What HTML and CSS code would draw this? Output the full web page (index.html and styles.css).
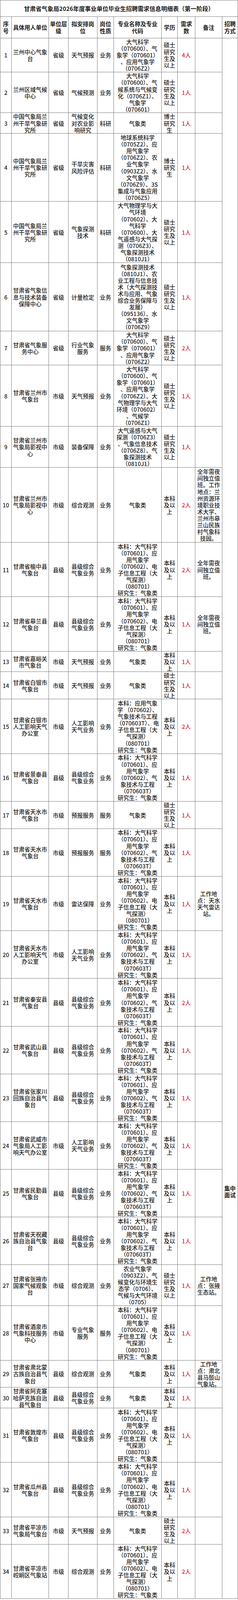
FILE: index.html
```html
<!DOCTYPE html>
<html lang="zh-CN">
<head>
<meta charset="utf-8">
<title>甘肃省气象局2026年度事业单位毕业生招聘需求信息明细表</title>
<link rel="stylesheet" href="styles.css">
</head>
<body>
<div class="sheet">
<div class="c title">甘肃省气象局2026年度事业单位毕业生招聘需求信息明细表（第一阶段）</div>
<div class="c hd">序<br>号</div><div class="c hd">具体用人单位</div><div class="c hd">单位层<br>级</div><div class="c hd">拟安排岗<br>位</div><div class="c hd">岗位<br>性质</div><div class="c hd">专业名称及专业<br>代码</div><div class="c hd">学历</div><div class="c hd">需求<br>数</div><div class="c hd">备注</div><div class="c hd">招聘<br>方式</div>
<div class="c method">集中<br>面试</div>

<div class="c">1</div><div class="c">兰州中心气象<br>台</div><div class="c">省级</div><div class="c">天气预报</div><div class="c">业务</div><div class="c">大气科学<br>（070600）、气<br>象学（070601）<br>、应用气象学<br>（0706Z2）</div><div class="c">硕士<br>研究<br>生及<br>以上</div><div class="c num">4人</div><div class="c"></div>
<div class="c">2</div><div class="c">兰州区域气候<br>中心</div><div class="c">省级</div><div class="c">气候预测</div><div class="c">业务</div><div class="c">大气科学<br>（070600）、气<br>候系统与气候变<br>化（0706Z1）、<br>气象学<br>（070601）</div><div class="c">硕士<br>研究<br>生及<br>以上</div><div class="c num">1人</div><div class="c"></div>
<div class="c">3</div><div class="c">中国气象局兰<br>州干旱气象研<br>究所</div><div class="c">省级</div><div class="c">气候变化<br>对农业影<br>响研究</div><div class="c">科研</div><div class="c">气象类</div><div class="c">博士<br>研究<br>生</div><div class="c num">1人</div><div class="c"></div>
<div class="c">4</div><div class="c">中国气象局兰<br>州干旱气象研<br>究所</div><div class="c">省级</div><div class="c">干旱灾害<br>风险评估</div><div class="c">科研</div><div class="c">地球系统科学<br>（0705Z2）、应<br>用气象学<br>（0706Z2）、农<br>业气象学<br>（0903Z2）、水<br>文气象学<br>（0706Z9）、3S<br>集成与气象应用<br>（0706Z5）</div><div class="c">博士<br>研究<br>生</div><div class="c num">1人</div><div class="c"></div>
<div class="c">5</div><div class="c">中国气象局兰<br>州干旱气象研<br>究所</div><div class="c">省级</div><div class="c">气象探测<br>技术</div><div class="c">科研</div><div class="c">大气物理学与大<br>气环境<br>（070602）、大<br>气科学<br>（070600）、大<br>气遥感与大气探<br>测（0706Z3）、<br>气象探测技术<br>（0810J1）</div><div class="c">硕士<br>研究<br>生及<br>以上</div><div class="c num">1人</div><div class="c"></div>
<div class="c">6</div><div class="c">甘肃省气象信<br>息与技术装备<br>保障中心</div><div class="c">省级</div><div class="c">计量检定</div><div class="c">业务</div><div class="c">气象探测技术<br>（0810J1）、农<br>业工程与信息技<br>术（大气探测技<br>术与应用、气象<br>综合业务保障与<br>发展）<br>（095136）、水<br>文气象学<br>（0706Z9）</div><div class="c">硕士<br>研究<br>生及<br>以上</div><div class="c num">1人</div><div class="c"></div>
<div class="c">7</div><div class="c">甘肃省气象服<br>务中心</div><div class="c">省级</div><div class="c">行业气象<br>服务</div><div class="c">服务</div><div class="c">大气科学<br>（070600）、气<br>象学（070601）<br>、应用气象学<br>（0706Z2）</div><div class="c">硕士<br>研究<br>生及<br>以上</div><div class="c num">2人</div><div class="c"></div>
<div class="c">8</div><div class="c">甘肃省兰州市<br>气象台</div><div class="c">市级</div><div class="c">天气预报</div><div class="c">业务</div><div class="c">大气科学<br>（070600）、气<br>象学（070601）<br>、应用气象学<br>（0706Z2）、大<br>气物理学与大气<br>环境（070602）<br>、气候学<br>（0706Z1）</div><div class="c">硕士<br>研究<br>生及<br>以上</div><div class="c num">1人</div><div class="c"></div>
<div class="c">9</div><div class="c">甘肃省兰州市<br>气象局影视中<br>心</div><div class="c">市级</div><div class="c">装备保障</div><div class="c">业务</div><div class="c">大气遥感与大气<br>探测（0706Z3）<br>、气象信息技术<br>（0706Z8）、气<br>象探测技术<br>（0810J1）</div><div class="c">硕士<br>研究<br>生及<br>以上</div><div class="c num">1人</div><div class="c"></div>
<div class="c">10</div><div class="c">甘肃省兰州市<br>气象局影视中<br>心</div><div class="c">市级</div><div class="c">综合观测</div><div class="c">业务</div><div class="c">气象类</div><div class="c">本科<br>及以<br>上</div><div class="c num">2人</div><div class="c">全年需夜<br>间独立值<br>班。工作<br>地点：兰<br>州资源环<br>境职业技<br>术大学、<br>兰州市皋<br>兰山民族<br>村气象科<br>技园。</div>
<div class="c">11</div><div class="c">甘肃省榆中县<br>气象台</div><div class="c">县级</div><div class="c">县级综合<br>气象业务</div><div class="c">业务</div><div class="c">本科：大气科学<br>（070601）、应<br>用气象学<br>（070602）、电<br>子信息工程（大<br>气探测）<br>（080701）<br>研究生：气象类</div><div class="c">本科<br>及以<br>上</div><div class="c num">2人</div><div class="c">全年需夜<br>间独立值<br>班。</div>
<div class="c">12</div><div class="c">甘肃省皋兰县<br>气象台</div><div class="c">县级</div><div class="c">县级综合<br>气象业务</div><div class="c">业务</div><div class="c">本科：大气科学<br>（070601）、应<br>用气象学<br>（070602）、电<br>子信息工程（大<br>气探测）<br>（080701）<br>研究生：气象类</div><div class="c">本科<br>及以<br>上</div><div class="c num">1人</div><div class="c">全年需夜<br>间独立值<br>班。</div>
<div class="c">13</div><div class="c">甘肃省嘉峪关<br>市气象台</div><div class="c">市级</div><div class="c">天气预报</div><div class="c">业务</div><div class="c">气象类</div><div class="c">本科<br>及以<br>上</div><div class="c num">1人</div><div class="c"></div>
<div class="c">14</div><div class="c">甘肃省白银市<br>气象台</div><div class="c">市级</div><div class="c">天气预报</div><div class="c">业务</div><div class="c">气象类</div><div class="c">硕士<br>研究<br>生及<br>以上</div><div class="c num">1人</div><div class="c"></div>
<div class="c">15</div><div class="c">甘肃省白银市<br>人工影响天气<br>办公室</div><div class="c">市级</div><div class="c">人工影响<br>天气业务</div><div class="c">业务</div><div class="c">本科：应用气象<br>学 （070602）、<br>气象技术与工程<br>（070603T）、电<br>子信息工程（大<br>气探测）<br>（080701）<br>研究生：气象类</div><div class="c">本科<br>及以<br>上</div><div class="c num">2人</div><div class="c"></div>
<div class="c">16</div><div class="c">甘肃省景泰县<br>气象台</div><div class="c">县级</div><div class="c">县级综合<br>气象业务</div><div class="c">业务</div><div class="c">本科：大气科学<br>（070601）、应<br>用气象学<br>（070602）、气<br>象技术与工程<br>（070603T）<br>研究生：气象类</div><div class="c">本科<br>及以<br>上</div><div class="c num">1人</div><div class="c"></div>
<div class="c">17</div><div class="c">甘肃省天水市<br>气象台</div><div class="c">市级</div><div class="c">预报服务</div><div class="c">服务</div><div class="c">气象类</div><div class="c">硕士<br>研究<br>生及<br>以上</div><div class="c num">1人</div><div class="c"></div>
<div class="c">18</div><div class="c">甘肃省天水市<br>气象台</div><div class="c">市级</div><div class="c">预报服务</div><div class="c">服务</div><div class="c">本科：大气科学<br>（070601）、应<br>用气象学<br>（070602）、气<br>象技术与工程<br>（070603T）<br>研究生：气象类</div><div class="c">本科<br>及以<br>上</div><div class="c num">1人</div><div class="c"></div>
<div class="c">19</div><div class="c">甘肃省天水市<br>气象台</div><div class="c">市级</div><div class="c">雷达保障</div><div class="c">业务</div><div class="c">本科：大气科学<br>（070601）、应<br>用气象学<br>（070602）、电<br>子信息工程（大<br>气探测）<br>（080701）<br>研究生：气象类</div><div class="c">本科<br>及以<br>上</div><div class="c num">1人</div><div class="c">工作地<br>点：天水<br>天气雷达<br>站。</div>
<div class="c">20</div><div class="c">甘肃省天水市<br>人工影响天气<br>办公室</div><div class="c">市级</div><div class="c">人工影响<br>天气业务</div><div class="c">业务</div><div class="c">本科：大气科学<br>（070601）、应<br>用气象学<br>（070602）、气<br>象技术与工程<br>（070603T）<br>研究生：气象类</div><div class="c">本科<br>及以<br>上</div><div class="c num">1人</div><div class="c"></div>
<div class="c">21</div><div class="c">甘肃省秦安县<br>气象台</div><div class="c">县级</div><div class="c">县级综合<br>气象业务</div><div class="c">业务</div><div class="c">本科：大气科学<br>（070601）、应<br>用气象学<br>（070602）、气<br>象技术与工程<br>（070603T）<br>研究生：气象类</div><div class="c">本科<br>及以<br>上</div><div class="c num">2人</div><div class="c"></div>
<div class="c">22</div><div class="c">甘肃省武山县<br>气象台</div><div class="c">县级</div><div class="c">县级综合<br>气象业务</div><div class="c">业务</div><div class="c">本科：大气科学<br>（070601）、应<br>用气象学<br>（070602）、气<br>象技术与工程<br>（070603T）<br>研究生：气象类</div><div class="c">本科<br>及以<br>上</div><div class="c num">1人</div><div class="c"></div>
<div class="c">23</div><div class="c">甘肃省张家川<br>回族自治县气<br>象台</div><div class="c">县级</div><div class="c">县级综合<br>气象业务</div><div class="c">业务</div><div class="c">本科：大气科学<br>（070601）、应<br>用气象学<br>（070602）、气<br>象技术与工程<br>（070603T）<br>研究生：气象类</div><div class="c">本科<br>及以<br>上</div><div class="c num">1人</div><div class="c"></div>
<div class="c">24</div><div class="c">甘肃省武威市<br>气象局人工影<br>响天气办公室</div><div class="c">市级</div><div class="c">人工影响<br>天气业务</div><div class="c">业务</div><div class="c">本科：大气科学<br>（070601）、应<br>用气象学<br>（070602）、气<br>象技术与工程<br>（070603T）<br>研究生：气象类</div><div class="c">本科<br>及以<br>上</div><div class="c num">1人</div><div class="c"></div>
<div class="c">25</div><div class="c">甘肃省民勤县<br>气象台</div><div class="c">县级</div><div class="c">县级综合<br>气象业务</div><div class="c">业务</div><div class="c">本科：大气科学<br>（070601）、应<br>用气象学<br>（070602）、气<br>象技术与工程<br>（070603T）<br>研究生：气象类</div><div class="c">本科<br>及以<br>上</div><div class="c num">1人</div><div class="c"></div>
<div class="c">26</div><div class="c">甘肃省天祝藏<br>族自治县气象<br>台</div><div class="c">县级</div><div class="c">县级综合<br>气象业务</div><div class="c">业务</div><div class="c">本科：大气科学<br>（070601）、应<br>用气象学<br>（070602）、气<br>象技术与工程<br>（070603T）<br>研究生：气象类</div><div class="c">本科<br>及以<br>上</div><div class="c num">1人</div><div class="c"></div>
<div class="c">27</div><div class="c">甘肃省张掖市<br>国家气候观象<br>台</div><div class="c">市级</div><div class="c">综合观测</div><div class="c">业务</div><div class="c">农业气象学<br>（0903Z2）、气<br>候变化与环境生<br>态学（0706）、<br>气候与大气环境<br>（0705）</div><div class="c">硕士<br>研究<br>生及<br>以上</div><div class="c num">1人</div><div class="c">工作地<br>点：张掖<br>生态站。</div>
<div class="c">28</div><div class="c">甘肃省酒泉市<br>气象科技服务<br>中心</div><div class="c">市级</div><div class="c">专业气象<br>服务</div><div class="c">服务</div><div class="c">本科：大气科学<br>（070601）、应<br>用气象学<br>（070602）、电<br>子信息工程（大<br>气探测）<br>（080701）<br>研究生：气象类</div><div class="c">本科<br>及以<br>上</div><div class="c num">1人</div><div class="c"></div>
<div class="c">29</div><div class="c">甘肃省肃北蒙<br>古族自治县气<br>象台</div><div class="c">县级</div><div class="c">综合观测</div><div class="c">业务</div><div class="c">气象类</div><div class="c">本科<br>及以<br>上</div><div class="c num">1人</div><div class="c">工作地<br>点：肃北<br>县马鬃山<br>气象站。</div>
<div class="c">30</div><div class="c">甘肃省阿克塞<br>哈萨克族自治<br>县气象台</div><div class="c">县级</div><div class="c">县级综合<br>气象业务</div><div class="c">业务</div><div class="c">气象类</div><div class="c">本科<br>及以<br>上</div><div class="c num">1人</div><div class="c"></div>
<div class="c">31</div><div class="c">甘肃省敦煌市<br>气象台</div><div class="c">县级</div><div class="c">县级综合<br>气象业务</div><div class="c">业务</div><div class="c">本科：大气科学<br>（070601）、应<br>用气象学<br>（070602）、电<br>子信息工程（大<br>气探测）<br>（080701）<br>研究生：气象类</div><div class="c">本科<br>及以<br>上</div><div class="c num">1人</div><div class="c"></div>
<div class="c">32</div><div class="c">甘肃省瓜州县<br>气象台</div><div class="c">县级</div><div class="c">县级综合<br>气象业务</div><div class="c">业务</div><div class="c">本科：大气科学<br>（070601）、应<br>用气象学<br>（070602）、电<br>子信息工程（大<br>气探测）<br>（080701）<br>研究生：气象类</div><div class="c">本科<br>及以<br>上</div><div class="c num">1人</div><div class="c"></div>
<div class="c">33</div><div class="c">甘肃省平凉市<br>气象局气象台</div><div class="c">市级</div><div class="c">天气预报</div><div class="c">业务</div><div class="c">气象类</div><div class="c">硕士<br>研究<br>生及<br>以上</div><div class="c num">2人</div><div class="c"></div>
<div class="c">34</div><div class="c">甘肃省平凉市<br>崆峒区气象站</div><div class="c">市级</div><div class="c">综合观测</div><div class="c">业务</div><div class="c">本科：大气科学<br>（070601）、应<br>用气象学<br>（070602）、电<br>子信息工程（大<br>气探测）<br>（080701）<br>研究生：气象类</div><div class="c">本科<br>及以<br>上</div><div class="c num">2人</div><div class="c"></div>
</div>
</body>
</html>
```

FILE: styles.css
```css
html, body {
  margin: 0;
  padding: 0;
  background: #ffffff;
}

body {
  font-family: "Noto Sans CJK SC", sans-serif;
  color: #1c1c1c;
}

/* row tracks: one text line = 17.45px */
.sheet {
  width: 608px;
  box-sizing: border-box;
  display: grid;
  grid-template-columns: 29px 95px 50px 74px 42px 122px 41px 45px 69px 40px;
  grid-template-rows:
    41.5px 55px
    87.25px 104.7px 52.35px 174.5px 157.05px 174.5px 87.25px 157.05px 104.7px 191.95px
    139.6px 139.6px 52.35px 69.8px 139.6px 122.15px 69.8px 122.15px 139.6px 122.15px
    122.15px 122.15px 122.15px 122.15px 122.15px 122.15px 104.7px 139.6px 69.8px 52.35px
    139.6px 139.6px 69.8px 139.6px;
  border-top: 1px solid #7c7c7c;
  border-left: 1px solid #7c7c7c;
}

.c {
  box-sizing: border-box;
  min-width: 0;
  min-height: 0;
  display: flex;
  align-items: center;
  justify-content: center;
  text-align: center;
  border-right: 1px solid #7c7c7c;
  border-bottom: 1px solid #7c7c7c;
  font-size: 14.5px;
  line-height: 17.1px;
  font-weight: 500;
  white-space: nowrap;
}

.title {
  grid-column: 1 / -1;
  font-size: 15px;
  font-weight: 700;
}

.hd {
  font-weight: 700;
}

.num {
  color: #e3222b;
}

.method {
  grid-column: 10;
  grid-row: 3 / span 34;
  align-items: flex-start;
  padding-top: 2935px;
  font-weight: 700;
}
```
